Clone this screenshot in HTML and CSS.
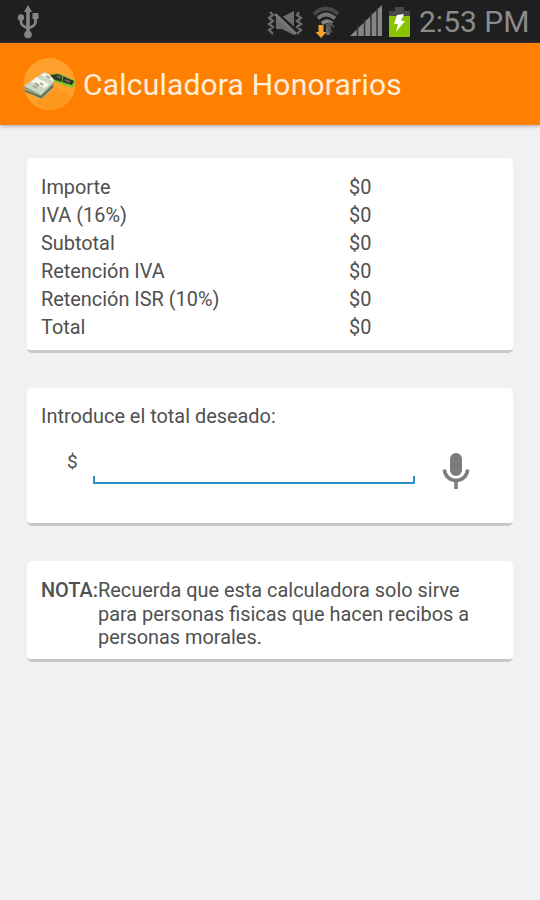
FILE: index.html
```html
<!DOCTYPE html>
<html lang="es">
<head>
<meta charset="utf-8">
<title>Calculadora Honorarios</title>
<link rel="stylesheet" href="styles.css">
</head>
<body>
<div class="status">
  <svg class="usb" width="24" height="36" viewBox="0 0 24 36" fill="#858585">
    <path d="M11 1 15 8H12.8V28H9.2V8H7Z"/><circle cx="11" cy="30.5" r="3.8"/><circle cx="4" cy="13.5" r="3.2"/><path d="M15.500 9h6v6h-6z"/>
    <path d="M4 14v4q0 4 7 6M18.500 14v4q0 4-7 6" fill="none" stroke="#858585" stroke-width="2.8"/>
  </svg>
  <svg class="mute" width="38" height="26" viewBox="0 0 38 26">
    <path d="M9 7h6l12-6v24l-12-6H9z" fill="#6c6c6c"/>
    <path d="M3 2 6 5 2 8 6 11 2 14 6 17 2 20 6 24M32 2l-2 3 4 3-4 3 4 3-4 3 4 3-4 4" fill="none" stroke="#6c6c6c" stroke-width="2.2"/>
    <path d="M10 3 30 21" stroke="#1f1f1f" stroke-width="2.5"/><path d="M8 4 29 24" stroke="#777" stroke-width="2.8"/>
  </svg>
  <svg class="wifi" width="30" height="34" viewBox="0 0 30 34">
    <g fill="none" stroke-width="3.8"><path d="M2 8Q14-3 26 8" stroke="#484848"/><path d="M6 12.500q8-8 17 0" stroke="#747474"/><path d="M10 17.500q5-4.500 10 0" stroke="#858585"/></g>
    <path d="M14 18h4v11h-4z" fill="#666"/><path d="M18 16v10M15 21l3-4 4 4M16 24l4 2" fill="none" stroke="#555" stroke-width="2"/>
    <path d="M6.500 19h5v7h3l-5.500 6-5.500-6h3z" fill="#f6a32d"/>
  </svg>
  <svg class="signal" width="34" height="32" viewBox="0 0 34 32">
    <path d="M0 31 32 0V31z" fill="#858585"/><path d="M7.500 20v11M14.500 14v17M21 8v23M27 3v28" stroke="#333" stroke-width="1.500"/>
  </svg>
  <svg class="battery" width="24" height="32" viewBox="0 0 24 32">
    <path d="M7 1h9v4h6v6H1V5h6z" fill="#484848"/><path d="M1 10h21v21H1z" fill="#88c400"/>
    <path d="m9 9 7-1-3 7h4L8 26l2-8H6z" fill="#fff"/>
  </svg>
  <span class="clock">2:53 PM</span>
</div>
<header class="bar">
  <svg class="logo" width="56" height="54" viewBox="0 0 56 54">
    <circle cx="26.500" cy="27" r="26" fill="#ffa02c"/><path d="M20 42 33 31l16 8a26 26 0 0 1-26 14L12 45z" fill="#fc981e"/>
    <path d="m1 29 17 8 13-13v6L19 42 2 35z" fill="#8d9d80"/><path d="m1 29 20-14 14 6-17 17z" fill="#cdd6bf"/>
    <path d="m2 34 16 6 12-11" fill="none" stroke="#55653f" stroke-width="1.200"/>
    <path d="m13 20 13 7-4 4-14-6z" fill="#f7f6ee"/><path d="m18 18 4-2 11 5-3 3z" fill="#f7f6ee"/>
    <path d="m10 29 4 2M17 26l3 2M12 26l4 3M23 19l4 2" stroke="#97a48a" stroke-width="1.800"/>
    <path d="m27 18 8-2 18 8-3 7-18-6z" fill="#7acb28"/><path d="m27 18 8-1 16 7-2 4-17-5z" fill="#303528"/>
    <path d="m34 19 4 2M42 23l5 2" stroke="#65675b" stroke-width="2"/><path d="m40 19-1 6" stroke="#79ad42" stroke-width="1"/>
  </svg>
  <h1>Calculadora Honorarios</h1>
</header>
<main>
  <dl class="card totals">
    <dt>Importe</dt><dd>$0</dd>
    <dt>IVA (16%)</dt><dd>$0</dd>
    <dt>Subtotal</dt><dd>$0</dd>
    <dt>Retención IVA</dt><dd>$0</dd>
    <dt>Retención ISR (10%)</dt><dd>$0</dd>
    <dt>Total</dt><dd>$0</dd>
  </dl>
  <section class="card entry">
    <p>Introduce el total deseado:</p>
    <div class="row">
      <span class="sign">$</span>
      <span class="field"></span>
      <svg class="mic" width="28" height="38" viewBox="0 0 28 38">
        <rect x="8" y="1" width="12" height="23" rx="6" fill="#7c7c7c"/>
        <path d="M2.500 17.500a11.500 11 0 0 0 23 0M14 28.500V37" fill="none" stroke="#7c7c7c" stroke-width="3.600"/>
      </svg>
    </div>
  </section>
  <section class="card note">
    <b>NOTA:</b>
    <p>Recuerda que esta calculadora solo sirve<br>para personas fisicas que hacen recibos a<br>personas morales.</p>
  </section>
</main>
</body>
</html>
```
FILE: styles.css
```css
* { box-sizing: border-box; margin: 0; padding: 0; }
body { height: 900px; overflow: hidden; background: #f1f1f1; color: #505050; font-family: Roboto, sans-serif; }
svg { display: block; flex: none; }
.status { display: flex; align-items: flex-start; height: 43px; padding: 4px 0 0 17px; background: #1f1f1f; border-bottom: 2px solid #17120f; }
.mute { margin: 6px 0 0 226px; }
.wifi { margin: 2px 0 0 7px; }
.signal { margin: 1px 0 0 8px; }
.battery { margin: 2px 0 0 4px; }
.clock { margin-left: 7px; font-size: 30px; line-height: 36px; white-space: nowrap; color: #8b8b8b; }
.bar { display: flex; align-items: center; height: 82px; padding-left: 23px; background: #ff8000; box-shadow: 0 1px 4px #a4a4ac; }
h1 { margin-left: 4px; padding-top: 2px; font-size: 30px; line-height: 34px; font-weight: 400; letter-spacing: 0.2px; color: #ffeedb; white-space: nowrap; }
main { display: flex; flex-direction: column; gap: 35px; padding: 33px 27px; font-size: 19.900px; }
.card { background: #fff; border-radius: 5px; border-bottom: 3px solid #c8c8c8; padding: 0 14px; }
.totals { display: grid; grid-template-columns: 308px 1fr; grid-auto-rows: 28.100px; height: 195px; padding-top: 16px; line-height: 28px; }
.entry { height: 138px; padding-top: 17px; line-height: 24px; }
.row { display: flex; align-items: flex-start; padding: 20px 0 0 26px; }
.sign { width: 26px; line-height: 26px; font-size: 19px; }
.field { width: 322px; height: 8px; margin-top: 27px; border: 2px solid #2b91c5; border-top: 0; }
.mic { margin: 3px 0 0 27px; }
.note { display: flex; height: 101px; padding-top: 18px; line-height: 23.500px; }
.note b { width: 57px; font-weight: 500; }
.note p { white-space: nowrap; }
```
